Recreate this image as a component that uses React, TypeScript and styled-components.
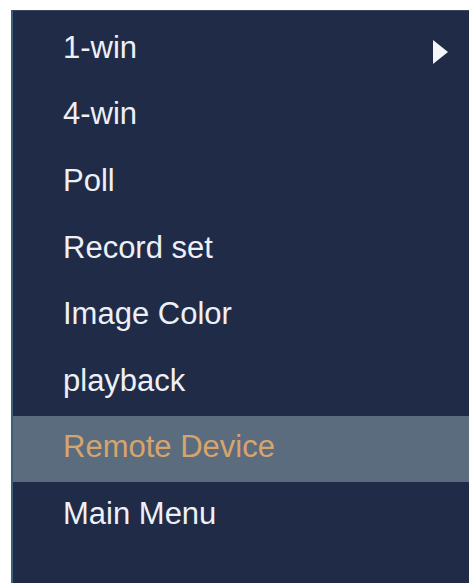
import React from "react";
import styled, { createGlobalStyle } from "styled-components";

const GlobalStyle = createGlobalStyle`
  html, body {
    margin: 0;
    padding: 0;
    background: #ffffff;
  }
  body {
    font-family: "Liberation Sans", Arial, sans-serif;
  }
`;

const Page = styled.div`
  width: 469px;
  height: 583px;
  padding: 10px 0 0 11px;
  box-sizing: border-box;
  display: flex;
`;

const Menu = styled.ul`
  flex: 1;
  margin: 0;
  padding: 5px 0 0;
  list-style: none;
  background: #202b47;
  border-left: 2px solid #3a5f78;
  border-top: 1px solid #3b4660;
  box-sizing: border-box;
  display: flex;
  flex-direction: column;
`;

const Item = styled.li<{ $active?: boolean }>`
  height: 66.6px;
  flex: none;
  display: flex;
  align-items: center;
  justify-content: space-between;
  padding: 0 21px 3px 50px;
  box-sizing: border-box;
  font-size: 31px;
  color: ${(p) => (p.$active ? "#d6a56c" : "#eef0f6")};
  background: ${(p) => (p.$active ? "#5c6c7f" : "transparent")};
  cursor: default;
`;

const Arrow = styled.span`
  width: 0;
  height: 0;
  margin-top: 8px;
  border-top: 12px solid transparent;
  border-bottom: 12px solid transparent;
  border-left: 15px solid #f4f6fb;
`;

const items = [
  { label: "1-win", sub: true },
  { label: "4-win" },
  { label: "Poll" },
  { label: "Record set" },
  { label: "Image Color" },
  { label: "playback" },
  { label: "Remote Device", active: true },
  { label: "Main Menu" },
];

export default function App() {
  return (
    <>
      <GlobalStyle />
      <Page>
        <Menu>
          {items.map((it) => (
            <Item key={it.label} $active={it.active}>
              <span>{it.label}</span>
              {it.sub && <Arrow />}
            </Item>
          ))}
        </Menu>
      </Page>
    </>
  );
}
